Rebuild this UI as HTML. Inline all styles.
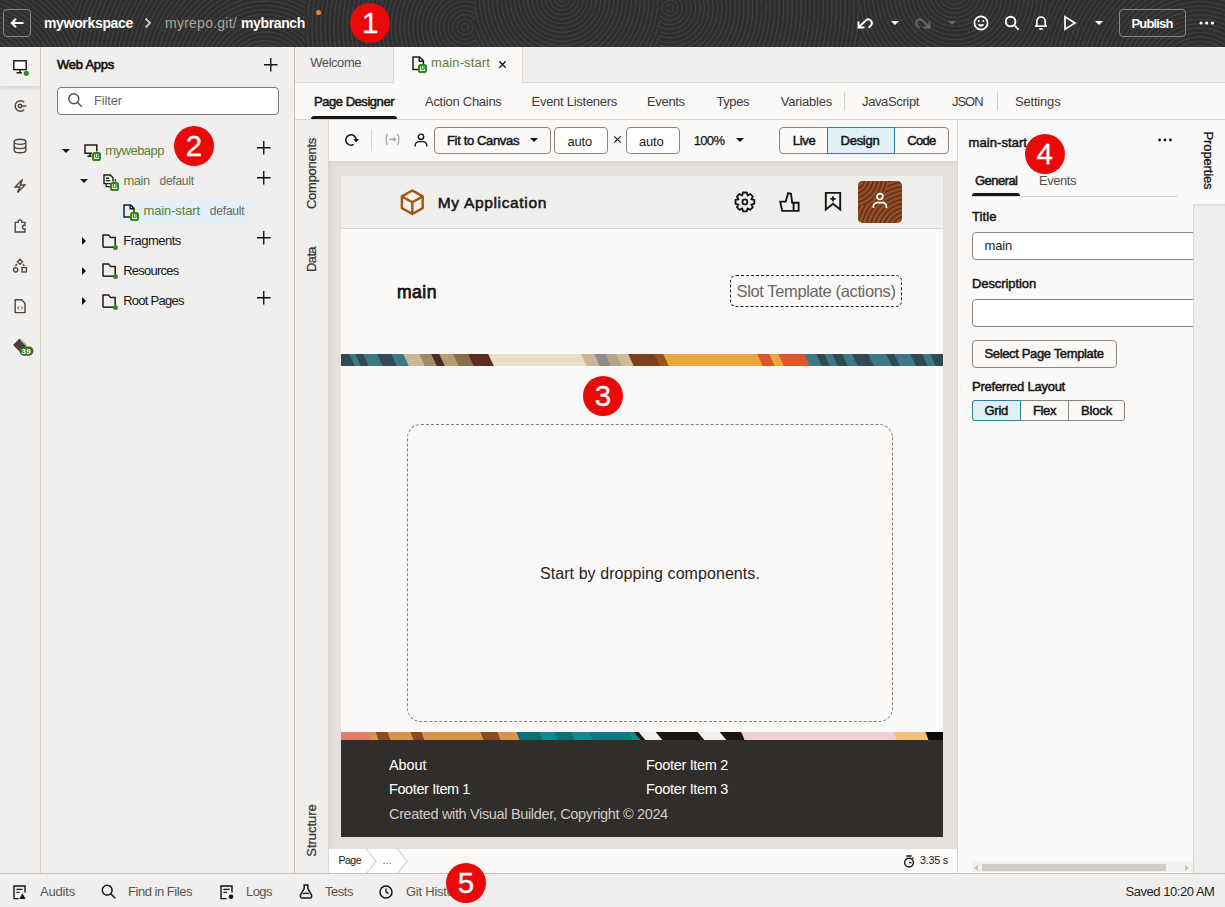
<!DOCTYPE html>
<html lang="en">
<head>
<meta charset="utf-8">
<title>Visual Builder - main-start</title>
<style>
*{box-sizing:border-box;margin:0;padding:0}
html,body{width:1225px;height:907px;overflow:hidden;background:#f1efed;font-family:"Liberation Sans",sans-serif;color:#161513;font-size:13px}
.abs{position:absolute}
#hdr{position:absolute;left:0;top:0;width:1225px;height:47px;background:#313131;overflow:hidden}
#hpat i{position:absolute;top:0;height:47px;display:block}
.badge{position:absolute;width:40px;height:40px;border-radius:50%;background:#e90909;color:#fff;font-size:29.5px;line-height:40.7px;text-align:center;z-index:50;-webkit-text-stroke:.3px #fff}
svg{position:absolute;overflow:visible}
.txt{position:absolute;white-space:pre}
.btn{position:absolute;border:1px solid #8b8580;border-radius:4px;background:#fbf9f8}
.inp{position:absolute;border:1px solid #8b8580;border-radius:4px;background:#fff}
</style>
</head>
<body>
<div id="hdr">
<div id="hpat" class="abs" style="left:0;top:0;width:1225px;height:47px">
<i style="left:0px;width:75px;background:repeating-radial-gradient(circle at -30px 90px,#2f2f2f 0,#2f2f2f 2.6px,#3e3e3e 3.1px,#3e3e3e 3.9px,#2f2f2f 4.4px)"></i>
<i style="left:75px;width:230px;background:repeating-radial-gradient(circle at 190px 75px,#2f2f2f 0,#2f2f2f 2.6px,#3e3e3e 3.1px,#3e3e3e 3.9px,#2f2f2f 4.4px)"></i>
<i style="left:305px;width:170px;background:repeating-radial-gradient(circle at 160px 27px,#2f2f2f 0,#2f2f2f 2.6px,#3e3e3e 3.1px,#3e3e3e 3.9px,#2f2f2f 4.4px)"></i>
<i style="left:475px;width:185px;background:repeating-radial-gradient(circle at 87px -2px,#2f2f2f 0,#2f2f2f 2.6px,#3e3e3e 3.1px,#3e3e3e 3.9px,#2f2f2f 4.4px)"></i>
<i style="left:660px;width:200px;background:repeating-radial-gradient(circle at 10px 8px,#2f2f2f 0,#2f2f2f 2.6px,#3e3e3e 3.1px,#3e3e3e 3.9px,#2f2f2f 4.4px)"></i>
<i style="left:860px;width:190px;background:repeating-radial-gradient(circle at 95px -8px,#2f2f2f 0,#2f2f2f 2.6px,#3e3e3e 3.1px,#3e3e3e 3.9px,#2f2f2f 4.4px)"></i>
<i style="left:1050px;width:175px;background:repeating-radial-gradient(circle at 150px 80px,#2f2f2f 0,#2f2f2f 2.6px,#3e3e3e 3.1px,#3e3e3e 3.9px,#2f2f2f 4.4px)"></i>
</div>
<div class="abs" style="left:3px;top:9px;width:28px;height:28px;border:1px solid #8b8580;border-radius:4px"></div>
<svg width="14" height="10" style="left:10px;top:18px" viewBox="0 0 14 10" fill="none" stroke="#fff" stroke-width="2"><path d="M13.5 5H2M6 0.8L1.8 5L6 9.2"/></svg>
<div class="txt" style="left:44px;top:16.4px;font-size:14px;line-height:14px;font-weight:bold;color:#fff;letter-spacing:-0.33px;">myworkspace</div>
<svg width="8" height="12" style="left:144px;top:17px" viewBox="0 0 8 12" fill="none" stroke="#c9c5c0" stroke-width="1.8"><path d="M1.5 1.5L6 6L1.5 10.5"/></svg>
<div class="txt" style="left:165px;top:16.4px;font-size:14px;line-height:14px;font-weight:normal;color:#a8a4a0;letter-spacing:0.25px;">myrepo.git/</div>
<div class="txt" style="left:241px;top:16.4px;font-size:14px;line-height:14px;font-weight:bold;color:#fff;letter-spacing:-0.37px;">mybranch</div>
<div class="abs" style="left:315.5px;top:10px;width:5px;height:5px;border-radius:50%;background:#e8823a"></div>
<svg width="16" height="12" style="left:857px;top:17px" viewBox="0 0 16 12" fill="none" stroke="#fff" stroke-width="1.9"><path d="M1.5 4.5V10.5H7.5M2 10L9 3.2A3.6 3.6 0 0 1 14 8.3L11.5 10.8"/></svg>
<svg width="8" height="4" style="left:891px;top:21px" viewBox="0 0 8 4"><path d="M0 0H8L4 4Z" fill="#fff"/></svg>
<svg width="16" height="12" style="left:915px;top:17px" viewBox="0 0 16 12" fill="none" stroke="#6b6763" stroke-width="1.9"><path d="M14.5 4.5V10.5H8.5M14 10L7 3.2A3.6 3.6 0 0 0 2 8.3L4.5 10.8"/></svg>
<svg width="8" height="4" style="left:948px;top:21px" viewBox="0 0 8 4"><path d="M0 0H8L4 4Z" fill="#6b6763"/></svg>
<svg width="16" height="16" style="left:973px;top:15px" viewBox="0 0 16 16" fill="none" stroke="#fff" stroke-width="1.7"><circle cx="8" cy="8" r="6.6"/><path d="M4.8 9.3A3.3 3.3 0 0 0 11.2 9.3Z" fill="#fff" stroke="none"/><circle cx="5.7" cy="6" r="1" fill="#fff" stroke="none"/><circle cx="10.3" cy="6" r="1" fill="#fff" stroke="none"/></svg>
<svg width="16" height="16" style="left:1004px;top:15px" viewBox="0 0 16 16" fill="none" stroke="#fff" stroke-width="1.9"><circle cx="6.6" cy="6.6" r="4.8"/><path d="M10.2 10.2L14.6 14.6"/></svg>
<svg width="14" height="16" style="left:1034px;top:15px" viewBox="0 0 14 16" fill="none" stroke="#fff" stroke-width="1.7"><path d="M1 11.2H13M2.8 11V6.2A4.2 4.2 0 0 1 11.2 6.2V11M5.3 13.8H8.7"/></svg>
<svg width="14" height="16" style="left:1063px;top:15px" viewBox="0 0 14 16" fill="none" stroke="#fff" stroke-width="1.7"><path d="M2 1.8V14.2L12 8Z"/></svg>
<svg width="8" height="4" style="left:1094.5px;top:21px" viewBox="0 0 8 4"><path d="M0 0H8L4 4Z" fill="#fff"/></svg>
<div class="abs" style="left:1119px;top:9px;width:67px;height:28px;border:1px solid #8b8580;border-radius:4px"></div>
<div class="txt" style="left:1131.5px;top:16.5px;font-size:13px;line-height:13px;font-weight:bold;color:#fff;letter-spacing:-0.85px;">Publish</div>
<svg width="16" height="4" style="left:1199px;top:21px" viewBox="0 0 16 4" fill="#fff"><circle cx="2" cy="2" r="1.6"/><circle cx="7.7" cy="2" r="1.6"/><circle cx="13.4" cy="2" r="1.6"/></svg>
</div>
<div class="abs" style="left:0;top:47px;width:41px;height:826px;background:#f1efed;border-right:1px solid #d3cfca"></div>
<div class="abs" style="left:0;top:47px;width:40px;height:39px;background:#f2f0ee;box-shadow:0 2px 4px rgba(0,0,0,.13)"></div>
<svg width="16" height="16" style="left:12px;top:59px" viewBox="0 0 16 16" fill="none" stroke="#1f1c1a" stroke-width="1.45"><rect x="1.8" y="1.8" width="12.4" height="8.8" fill="#fff"/><path d="M8 10.6V13.6M4.5 13.8H10"/><circle cx="14.3" cy="14.3" r="2.6" fill="#2f8a1f" stroke="none"/></svg>
<svg width="16" height="16" style="left:12px;top:98px" viewBox="0 0 16 16" fill="none" stroke="#4a4541" stroke-width="1.4"><path d="M12.2 4.2A5.3 5.3 0 1 0 12.2 11.8"/><circle cx="8" cy="8" r="1.7"/><path d="M9.7 8H14.5"/></svg>
<svg width="16" height="16" style="left:12px;top:138px" viewBox="0 0 16 16" fill="none" stroke="#4a4541" stroke-width="1.4"><ellipse cx="8" cy="3.8" rx="5.8" ry="2.6"/><path d="M2.2 3.8V12.2C2.2 13.6 4.8 14.8 8 14.8S13.8 13.6 13.8 12.2V3.8M2.2 8C2.2 9.4 4.8 10.6 8 10.6S13.8 9.4 13.8 8"/></svg>
<svg width="16" height="16" style="left:12px;top:178px" viewBox="0 0 16 16" fill="none" stroke="#4a4541" stroke-width="1.4" stroke-linejoin="miter"><path d="M10.5 1.5L3 9H7.8L5.5 14.5L13 7H8.2Z"/></svg>
<svg width="16" height="16" style="left:12px;top:218px" viewBox="0 0 16 16" fill="none" stroke="#4a4541" stroke-width="1.4"><path d="M3.2 14V4.4H6.2A1.9 1.9 0 1 1 9.8 4.4H13V7.4A1.9 1.9 0 1 0 13 11V14Z"/></svg>
<svg width="16" height="16" style="left:12px;top:258px" viewBox="0 0 16 16" fill="none" stroke="#4a4541" stroke-width="1.3"><path d="M8 1.2L10.6 3.8L8 6.4L5.4 3.8Z"/><circle cx="3.6" cy="11.8" r="2.2"/><rect x="10" y="9.6" width="4.4" height="4.4"/><path d="M3.4 8.2L5 6M12.4 8.2L11 6"/></svg>
<svg width="16" height="16" style="left:12px;top:298px" viewBox="0 0 16 16" fill="none" stroke="#4a4541" stroke-width="1.4"><path d="M3.2 1.8H9.6L13 5.2V14.6H3.2Z"/><path d="M7 8.6L5.6 10L7 11.4M9.2 8.6L10.6 10L9.2 11.4" stroke-width="1"/></svg>
<svg width="22" height="20" style="left:12px;top:337px" viewBox="0 0 22 20"><path d="M7.5 1.5L14.5 8.5L8 15L1 8Z" fill="#47423e"/><path d="M8.5 2.5L14 8" stroke="#b9b4ae" stroke-width="1.6"/><rect x="7.5" y="9.5" width="14" height="9.2" rx="4.6" fill="#3f6f1d"/></svg>
<div class="txt" style="left:21.6px;top:347.6px;font-size:8px;line-height:8px;font-weight:bold;color:#fff;letter-spacing:0.25px;">39</div>
<div class="abs" style="left:41px;top:47px;width:254px;height:826px;background:#f1efed;border-right:1px solid #c4c0bb"></div>
<div class="txt" style="left:57px;top:58.0px;font-size:13px;line-height:13px;font-weight:normal;color:#161513;letter-spacing:-0.25px;-webkit-text-stroke:.65px #161513;">Web Apps</div>
<svg width="13.5" height="13.5" style="left:263.75px;top:58.05px" viewBox="0 0 13.5 13.5" stroke="#161513" stroke-width="1.4"><path d="M6.75 0V13.5M0 6.75H13.5"/></svg>
<div class="inp" style="left:57px;top:87px;width:222px;height:28px;border-color:#7d7873"></div>
<svg width="16" height="16" style="left:67px;top:92px" viewBox="0 0 16 16" fill="none" stroke="#55504b" stroke-width="1.4"><circle cx="6.8" cy="6.8" r="5"/><path d="M10.5 10.5L14.8 14.8"/></svg>
<div class="txt" style="left:94px;top:94.0px;font-size:13px;line-height:13px;font-weight:normal;color:#6b6560;letter-spacing:-0.15px;">Filter</div>
<svg width="8" height="4" style="left:62px;top:149.2px" viewBox="0 0 8 4"><path d="M0 0H8L4 4Z" fill="#161513"/></svg>
<svg width="14" height="13" style="left:84.3px;top:143.6px" viewBox="0 0 14 13" fill="none" stroke="#1f1c1a" stroke-width="1.5"><path d="M8 9.3H1V1H12.8V7.5"/><path d="M6 9.5V12M3.4 12.2H7.6"/></svg>
<div class="abs" style="left:92px;top:152px;width:9px;height:9px;border:2px solid #2f8a12;border-radius:2.6px;background:#f7fbf3"></div><div class="txt" style="left:94.4px;top:153.7px;font-size:5.8px;line-height:5.8px;font-weight:bold;color:#1d6a07;-webkit-text-stroke:.25px #1d6a07">U</div>
<div class="txt" style="left:105.3px;top:144.0px;font-size:13px;line-height:13px;font-weight:normal;color:#5a7f35;letter-spacing:-0.52px;">mywebapp</div>
<svg width="13.5" height="13.5" style="left:257.45px;top:141.45px" viewBox="0 0 13.5 13.5" stroke="#161513" stroke-width="1.4"><path d="M6.75 0V13.5M0 6.75H13.5"/></svg>
<svg width="8" height="4" style="left:80px;top:179px" viewBox="0 0 8 4"><path d="M0 0H8L4 4Z" fill="#161513"/></svg>
<svg width="14" height="14" style="left:102.6px;top:174px" viewBox="0 0 14 14" fill="none" stroke="#1f1c1a" stroke-width="1.4"><path d="M8 9.6H1V1H7.2L10 3.8V7.4"/><path d="M3 4.2H6M3 6.6H7.4"/><path d="M3.2 9.8V12.6H7.6M12.4 5.2V7.4"/></svg>
<div class="abs" style="left:110px;top:182px;width:9px;height:9px;border:2px solid #2f8a12;border-radius:2.6px;background:#f7fbf3"></div><div class="txt" style="left:112.4px;top:183.7px;font-size:5.8px;line-height:5.8px;font-weight:bold;color:#1d6a07;-webkit-text-stroke:.25px #1d6a07">U</div>
<div class="txt" style="left:123.5px;top:174.0px;font-size:13px;line-height:13px;font-weight:normal;color:#5a7f35;letter-spacing:-0.47px;">main</div>
<div class="txt" style="left:159.5px;top:175.3px;font-size:12px;line-height:12px;font-weight:normal;color:#6b6560;letter-spacing:-0.25px;">default</div>
<svg width="13.5" height="13.5" style="left:257.45px;top:171.45px" viewBox="0 0 13.5 13.5" stroke="#161513" stroke-width="1.4"><path d="M6.75 0V13.5M0 6.75H13.5"/></svg>
<div class="abs" style="left:118px;top:199px;width:132px;height:24px;background:#e4f0f7"></div>
<svg width="13" height="14" style="left:123.2px;top:204px" viewBox="0 0 13 14" fill="none" stroke="#1f1c1a" stroke-width="1.5"><path d="M7.4 13H1V1H7.6L11 4.4V8.4"/><path d="M7.2 1.2V4.8H10.8"/></svg>
<div class="abs" style="left:130px;top:212px;width:9px;height:9px;border:2px solid #2f8a12;border-radius:2.6px;background:#f7fbf3"></div><div class="txt" style="left:132.4px;top:213.7px;font-size:5.8px;line-height:5.8px;font-weight:bold;color:#1d6a07;-webkit-text-stroke:.25px #1d6a07">U</div>
<div class="txt" style="left:143.5px;top:204.1px;font-size:13px;line-height:13px;font-weight:normal;color:#5a7f35;letter-spacing:-0.13px;">main-start</div>
<div class="txt" style="left:209.8px;top:205.3px;font-size:12px;line-height:12px;font-weight:normal;color:#6b6560;letter-spacing:-0.2px;">default</div>
<svg width="4" height="8" style="left:82px;top:237.10000000000002px" viewBox="0 0 4 8"><path d="M0 0V8L4 4Z" fill="#161513"/></svg>
<svg width="16" height="16" style="left:101.6px;top:233.5px" viewBox="0 0 16 16" fill="none" stroke="#1f1c1a" stroke-width="1.5"><path d="M1 13.2V1H6.6L8.6 3.6H13.2V11"/><path d="M1 13.2H11.5"/><circle cx="13.4" cy="13.4" r="2.5" fill="#2f8a1f" stroke="none"/></svg>
<div class="txt" style="left:123.2px;top:234.3px;font-size:13px;line-height:13px;font-weight:normal;color:#161513;letter-spacing:-0.5px;">Fragments</div>
<svg width="13.5" height="13.5" style="left:257.45px;top:231.35000000000002px" viewBox="0 0 13.5 13.5" stroke="#161513" stroke-width="1.4"><path d="M6.75 0V13.5M0 6.75H13.5"/></svg>
<svg width="4" height="8" style="left:82px;top:267.0px" viewBox="0 0 4 8"><path d="M0 0V8L4 4Z" fill="#161513"/></svg>
<svg width="16" height="16" style="left:101.6px;top:263.4px" viewBox="0 0 16 16" fill="none" stroke="#1f1c1a" stroke-width="1.5"><path d="M1 13.2V1H6.6L8.6 3.6H13.2V11"/><path d="M1 13.2H11.5"/><circle cx="13.4" cy="13.4" r="2.5" fill="#2f8a1f" stroke="none"/></svg>
<div class="txt" style="left:123.2px;top:264.2px;font-size:13px;line-height:13px;font-weight:normal;color:#161513;letter-spacing:-0.77px;">Resources</div>
<svg width="4" height="8" style="left:82px;top:297.1px" viewBox="0 0 4 8"><path d="M0 0V8L4 4Z" fill="#161513"/></svg>
<svg width="16" height="16" style="left:101.6px;top:293.5px" viewBox="0 0 16 16" fill="none" stroke="#1f1c1a" stroke-width="1.5"><path d="M1 13.2V1H6.6L8.6 3.6H13.2V11"/><path d="M1 13.2H11.5"/><circle cx="13.4" cy="13.4" r="2.5" fill="#2f8a1f" stroke="none"/></svg>
<div class="txt" style="left:123.2px;top:294.3px;font-size:13px;line-height:13px;font-weight:normal;color:#161513;letter-spacing:-0.74px;">Root Pages</div>
<svg width="13.5" height="13.5" style="left:257.45px;top:291.35px" viewBox="0 0 13.5 13.5" stroke="#161513" stroke-width="1.4"><path d="M6.75 0V13.5M0 6.75H13.5"/></svg>
<div class="abs" style="left:0;top:873px;width:1225px;height:34px;background:#f1efed;border-top:1px solid #c4c0bb"></div>
<div class="txt" style="left:40px;top:885.0px;font-size:13px;line-height:13px;font-weight:normal;color:#5a5550;letter-spacing:-0.19px;">Audits</div>
<div class="txt" style="left:128px;top:885.0px;font-size:13px;line-height:13px;font-weight:normal;color:#5a5550;letter-spacing:-0.47px;">Find in Files</div>
<div class="txt" style="left:246px;top:885.0px;font-size:13px;line-height:13px;font-weight:normal;color:#5a5550;letter-spacing:-0.55px;">Logs</div>
<div class="txt" style="left:325px;top:885.0px;font-size:13px;line-height:13px;font-weight:normal;color:#5a5550;letter-spacing:-0.47px;">Tests</div>
<div class="txt" style="left:406px;top:885.0px;font-size:13px;line-height:13px;font-weight:normal;color:#5a5550;letter-spacing:-0.24px;">Git History</div>
<div class="txt" style="left:1125.5px;top:885.0px;font-size:13px;line-height:13px;font-weight:normal;color:#1f1c1a;letter-spacing:-0.46px;">Saved 10:20 AM</div>
<div class="abs" style="left:295px;top:47px;width:930px;height:826px;background:#fbf9f8"></div>
<div class="abs" style="left:295px;top:47px;width:930px;height:36px;background:#f1efed;border-bottom:1px solid #d9d5d1"></div>
<div class="abs" style="left:393px;top:47px;width:130px;height:36px;background:#fbf9f8;border-left:1px solid #dcd8d4;border-right:1px solid #dcd8d4"></div>
<div class="txt" style="left:310.3px;top:56.3px;font-size:13px;line-height:13px;font-weight:normal;color:#55504b;letter-spacing:-0.46px;">Welcome</div>
<svg width="13" height="15" style="left:411.8px;top:55.8px" viewBox="0 0 13 15" fill="none" stroke="#1f1c1a" stroke-width="1.5"><path d="M7.4 13.6H1V1H7.6L11.4 4.8V8.6"/><path d="M7.2 1.2V5.2H11.2"/></svg>
<div class="abs" style="left:418px;top:64px;width:9px;height:9px;border:2px solid #2f8a12;border-radius:2.6px;background:#f7fbf3"></div><div class="txt" style="left:420.4px;top:65.7px;font-size:5.8px;line-height:5.8px;font-weight:bold;color:#1d6a07;-webkit-text-stroke:.25px #1d6a07">U</div>
<div class="txt" style="left:431px;top:56.3px;font-size:13px;line-height:13px;font-weight:normal;color:#5a7f35;letter-spacing:0.12px;">main-start</div>
<svg width="7" height="7" style="left:498.7px;top:60.8px" viewBox="0 0 7 7" stroke="#161513" stroke-width="1.3"><path d="M0.3 0.3L6.7 6.7M6.7 0.3L0.3 6.7"/></svg>
<div class="abs" style="left:295px;top:119px;width:930px;height:1px;background:#d9d5d1"></div>
<div class="abs" style="left:311px;top:116.3px;width:86px;height:3.2px;background:#161513;border-radius:4px 4px 0 0"></div>
<div class="txt" style="left:314px;top:95.0px;font-size:13px;line-height:13px;font-weight:normal;color:#161513;letter-spacing:-0.46px;-webkit-text-stroke:.5px #161513;">Page Designer</div>
<div class="txt" style="left:425px;top:95.0px;font-size:13px;line-height:13px;font-weight:normal;color:#3f3a36;letter-spacing:-0.28px;">Action Chains</div>
<div class="txt" style="left:531.5px;top:95.0px;font-size:13px;line-height:13px;font-weight:normal;color:#3f3a36;letter-spacing:-0.27px;">Event Listeners</div>
<div class="txt" style="left:647px;top:95.0px;font-size:13px;line-height:13px;font-weight:normal;color:#3f3a36;letter-spacing:-0.34px;">Events</div>
<div class="txt" style="left:716.5px;top:95.0px;font-size:13px;line-height:13px;font-weight:normal;color:#3f3a36;letter-spacing:-0.44px;">Types</div>
<div class="txt" style="left:780.7px;top:95.0px;font-size:13px;line-height:13px;font-weight:normal;color:#3f3a36;letter-spacing:-0.21px;">Variables</div>
<div class="abs" style="left:844px;top:92px;width:1px;height:18px;background:#cfcbc6"></div>
<div class="txt" style="left:862px;top:95.0px;font-size:13px;line-height:13px;font-weight:normal;color:#3f3a36;letter-spacing:-0.37px;">JavaScript</div>
<div class="txt" style="left:952px;top:95.0px;font-size:13px;line-height:13px;font-weight:normal;color:#3f3a36;letter-spacing:-1.04px;">JSON</div>
<div class="abs" style="left:997px;top:92px;width:1px;height:18px;background:#cfcbc6"></div>
<div class="txt" style="left:1015px;top:95.0px;font-size:13px;line-height:13px;font-weight:normal;color:#3f3a36;letter-spacing:-0.19px;">Settings</div>
<div class="abs" style="left:295px;top:120px;width:34px;height:753px;background:#f1efed;border-right:1px solid #dcd8d4"></div>
<div class="txt" style="left:275.5px;top:167.0px;width:71.0px;font-size:13px;line-height:13px;font-weight:normal;color:#3a3531;letter-spacing:-0.27px;transform:rotate(-90deg);transform-origin:50% 50%;-webkit-text-stroke:.25px #3a3531;">Components</div>
<div class="txt" style="left:298.5px;top:253.0px;width:25.0px;font-size:13px;line-height:13px;font-weight:normal;color:#3a3531;letter-spacing:-0.62px;transform:rotate(-90deg);transform-origin:50% 50%;-webkit-text-stroke:.25px #3a3531;">Data</div>
<div class="txt" style="left:284.8px;top:823.8px;width:52.5px;font-size:13px;line-height:13px;font-weight:normal;color:#3a3531;letter-spacing:-0.03px;transform:rotate(-90deg);transform-origin:50% 50%;-webkit-text-stroke:.25px #3a3531;">Structure</div>
<div class="abs" style="left:329px;top:120px;width:628px;height:41px;background:#fbf9f8"></div>
<svg width="14" height="14" style="left:343.7px;top:133.3px" viewBox="0 0 14 14" fill="none" stroke="#161513" stroke-width="1.5"><path d="M9.6 11.5A5.2 5.2 0 1 1 12.2 6.6"/><path d="M9.4 6H15L12.2 9.6Z" fill="#161513" stroke="none"/></svg>
<div class="abs" style="left:371px;top:130px;width:1px;height:21px;background:#d9d5d1"></div>
<svg width="17" height="12.8" style="left:383.5px;top:133.4px" viewBox="0 0 16 12" fill="none" stroke="#a39e99" stroke-width="1.15"><path d="M3.2 0.8Q0.6 6 3.2 11.2M12.8 0.8Q15.4 6 12.8 11.2M5 6H10.6M8.8 4.2L10.8 6L8.8 7.8"/></svg>
<svg width="14" height="14" style="left:413.5px;top:133px" viewBox="0 0 14 14" fill="none" stroke="#161513" stroke-width="1.4"><circle cx="7" cy="3.8" r="2.7"/><path d="M1.2 13.4V12.2A3.6 3.6 0 0 1 4.8 8.6H9.2A3.6 3.6 0 0 1 12.8 12.2V13.4"/></svg>
<div class="btn" style="left:434px;top:127px;width:117px;height:27px"></div>
<div class="txt" style="left:447px;top:134.0px;font-size:13px;line-height:13px;font-weight:normal;color:#161513;letter-spacing:-0.35px;-webkit-text-stroke:.5px #161513;">Fit to Canvas</div>
<svg width="8" height="4" style="left:530px;top:138px" viewBox="0 0 8 4"><path d="M0 0H8L4 4Z" fill="#161513"/></svg>
<div class="inp" style="left:554px;top:127px;width:54px;height:27px"></div>
<div class="txt" style="left:567.5px;top:134.5px;font-size:13px;line-height:13px;font-weight:normal;color:#1f1c1a;letter-spacing:-0.2px;">auto</div>
<svg width="7" height="7" style="left:613.5px;top:136.3px" viewBox="0 0 7 7" stroke="#1f1c1a" stroke-width="1.2"><path d="M0.3 0.3L6.7 6.7M6.7 0.3L0.3 6.7"/></svg>
<div class="inp" style="left:626px;top:127px;width:54px;height:27px"></div>
<div class="txt" style="left:639px;top:134.5px;font-size:13px;line-height:13px;font-weight:normal;color:#1f1c1a;letter-spacing:-0.2px;">auto</div>
<div class="txt" style="left:693.7px;top:134.0px;font-size:13px;line-height:13px;font-weight:normal;color:#161513;letter-spacing:-0.66px;-webkit-text-stroke:.25px #161513;">100%</div>
<svg width="8" height="4" style="left:736.4px;top:138px" viewBox="0 0 8 4"><path d="M0 0H8L4 4Z" fill="#161513"/></svg>
<div class="btn" style="left:779px;top:127px;width:170px;height:27px"></div>
<div class="abs" style="left:827px;top:127px;width:68px;height:27px;background:#e1eff6;border:1px solid #2d7fa6"></div>
<div class="txt" style="left:792.7px;top:134.0px;font-size:13px;line-height:13px;font-weight:normal;color:#161513;letter-spacing:-0.24px;-webkit-text-stroke:.5px #161513;">Live</div>
<div class="txt" style="left:840.6px;top:134.0px;font-size:13px;line-height:13px;font-weight:normal;color:#161513;letter-spacing:-0.28px;-webkit-text-stroke:.5px #161513;">Design</div>
<div class="txt" style="left:907.2px;top:134.0px;font-size:13px;line-height:13px;font-weight:normal;color:#161513;letter-spacing:-0.69px;-webkit-text-stroke:.5px #161513;">Code</div>
<div class="abs" style="left:329px;top:161px;width:628px;height:688px;background:#e4e1dd;box-shadow:inset 3px 3px 4px -2px rgba(0,0,0,.08)"></div>
<div class="abs" id="page" style="left:341px;top:176px;width:602px;height:661px;background:#fbf9f8"></div>
<div class="abs" style="left:341px;top:176px;width:602px;height:53px;background:#f1efed;border-bottom:1px solid #d9d5d1"></div>
<svg width="24.6" height="26.5" style="left:400.3px;top:188.8px" viewBox="0 0 26 28" fill="none" stroke="#9d590f" stroke-width="2.6" stroke-linejoin="round"><path d="M13 1.6L24 7.8V20.2L13 26.4L2 20.2V7.8Z"/><path d="M2.4 8L13 14L23.6 8M13 14V26"/></svg>
<div class="txt" style="left:437.8px;top:194.7px;font-size:15.5px;line-height:15.5px;font-weight:normal;color:#161513;letter-spacing:0.66px;-webkit-text-stroke:.55px #161513;">My Application</div>
<svg width="1" height="1" style="left:0;top:0" fill="none" stroke="#161513" stroke-width="1.8" stroke-linejoin="round"><path d="M754.31 199.99L754.31 203.81L751.28 204.52L751.27 204.56L752.90 207.20L750.20 209.90L747.56 208.27L747.52 208.28L746.81 211.31L742.99 211.31L742.28 208.28L742.24 208.27L739.60 209.90L736.90 207.20L738.53 204.56L738.52 204.52L735.49 203.81L735.49 199.99L738.52 199.28L738.53 199.24L736.90 196.60L739.60 193.90L742.24 195.53L742.28 195.52L742.99 192.49L746.81 192.49L747.52 195.52L747.56 195.53L750.20 193.90L752.90 196.60L751.27 199.24L751.28 199.28Z"/><circle cx="744.9" cy="201.9" r="2.5"/></svg>
<svg width="1" height="1" style="left:0;top:0" fill="none" stroke="#161513" stroke-width="1.9" stroke-linejoin="miter"><path d="M780.2 201.6H785.6L788.2 193.2L791 193.8L792.2 202.8H798.6V210.9H782.2Z"/><path d="M793.6 202.8V210.9"/></svg>
<svg width="18" height="22" style="left:824.2px;top:191.4px" viewBox="0 0 18 22" fill="none" stroke="#161513" stroke-width="1.9"><path d="M1.8 1.9H16.2V18.6L9 12.8L1.8 18.6Z"/><path d="M9 5.2V10.4M6.4 7.8H11.6" stroke-width="1.7"/></svg>
<div class="abs" style="left:858px;top:181px;width:44px;height:42px;border-radius:5px;overflow:hidden;background:#8a4b26"><div class="abs" style="left:0;top:0;width:44px;height:44px;background:repeating-radial-gradient(circle at 50px 52px,#6a3318 0,#6a3318 1px,#90502a 1.8px,#90502a 3.4px,#6a3318 4.2px)"></div><div class="abs" style="left:0;top:0;width:30px;height:24px;border-radius:0 0 24px 0;background:repeating-radial-gradient(circle at -6px -4px,#6a3318 0,#6a3318 1px,#90502a 1.8px,#90502a 3.4px,#6a3318 4.2px)"></div></div>
<svg width="16" height="16" style="left:872px;top:192px" viewBox="0 0 16 16" fill="none" stroke="#fff" stroke-width="1.7"><circle cx="7.9" cy="4.6" r="2.9"/><path d="M1.4 16V14.6A4 4 0 0 1 5.4 10.6H10.4A4 4 0 0 1 14.4 14.6V16"/></svg>
<div class="txt" style="left:397px;top:283.5px;font-size:17.6px;line-height:17.6px;font-weight:normal;color:#161513;letter-spacing:0.46px;-webkit-text-stroke:.75px #161513;">main</div>
<div class="abs" style="left:730px;top:275px;width:172px;height:32px;border:1px dashed #1f1c1a;border-radius:6px"></div>
<div class="txt" style="left:736.5px;top:283.2px;font-size:16.5px;line-height:16.5px;font-weight:normal;color:#6b6560;letter-spacing:-0.37px;">Slot Template (actions)</div>
<div class="abs" style="left:341px;top:354px;width:602px;height:12px;overflow:hidden;background:#39606d"><i class="abs" style="left:-6px;top:0;width:18px;height:12px;background:#2f4a52;transform:skewX(25deg)"></i><i class="abs" style="left:11px;top:0;width:7px;height:12px;background:#3d7888;transform:skewX(25deg)"></i><i class="abs" style="left:17px;top:0;width:9px;height:12px;background:#2f4a52;transform:skewX(25deg)"></i><i class="abs" style="left:25px;top:0;width:15px;height:12px;background:#3d7888;transform:skewX(25deg)"></i><i class="abs" style="left:39px;top:0;width:15px;height:12px;background:#2f4a52;transform:skewX(25deg)"></i><i class="abs" style="left:53px;top:0;width:13px;height:12px;background:#3d7888;transform:skewX(25deg)"></i><i class="abs" style="left:65px;top:0;width:17px;height:12px;background:#c9b797;transform:skewX(25deg)"></i><i class="abs" style="left:81px;top:0;width:13px;height:12px;background:#a38a64;transform:skewX(25deg)"></i><i class="abs" style="left:93px;top:0;width:9px;height:12px;background:#4d2c24;transform:skewX(25deg)"></i><i class="abs" style="left:101px;top:0;width:15px;height:12px;background:#b59c74;transform:skewX(25deg)"></i><i class="abs" style="left:115px;top:0;width:16px;height:12px;background:#8c6c4a;transform:skewX(25deg)"></i><i class="abs" style="left:130px;top:0;width:21px;height:12px;background:#5c2c1e;transform:skewX(25deg)"></i><i class="abs" style="left:150px;top:0;width:94px;height:12px;background:#e9dec6;transform:skewX(25deg)"></i><i class="abs" style="left:243px;top:0;width:14px;height:12px;background:#c9b797;transform:skewX(25deg)"></i><i class="abs" style="left:256px;top:0;width:12px;height:12px;background:#8e8c8a;transform:skewX(25deg)"></i><i class="abs" style="left:267px;top:0;width:12px;height:12px;background:#b8a582;transform:skewX(25deg)"></i><i class="abs" style="left:278px;top:0;width:13px;height:12px;background:#cfbb96;transform:skewX(25deg)"></i><i class="abs" style="left:290px;top:0;width:27px;height:12px;background:#7d3f1d;transform:skewX(25deg)"></i><i class="abs" style="left:316px;top:0;width:10px;height:12px;background:#9a5226;transform:skewX(25deg)"></i><i class="abs" style="left:325px;top:0;width:95px;height:12px;background:#e9a83e;transform:skewX(25deg)"></i><i class="abs" style="left:419px;top:0;width:13px;height:12px;background:#df562d;transform:skewX(25deg)"></i><i class="abs" style="left:431px;top:0;width:10px;height:12px;background:#e9a83e;transform:skewX(25deg)"></i><i class="abs" style="left:440px;top:0;width:27px;height:12px;background:#df562d;transform:skewX(25deg)"></i><i class="abs" style="left:466px;top:0;width:13px;height:12px;background:#3d7888;transform:skewX(25deg)"></i><i class="abs" style="left:478px;top:0;width:9px;height:12px;background:#2f4a52;transform:skewX(25deg)"></i><i class="abs" style="left:486px;top:0;width:9px;height:12px;background:#3d7888;transform:skewX(25deg)"></i><i class="abs" style="left:494px;top:0;width:11px;height:12px;background:#2f4a52;transform:skewX(25deg)"></i><i class="abs" style="left:504px;top:0;width:11px;height:12px;background:#3d7888;transform:skewX(25deg)"></i><i class="abs" style="left:514px;top:0;width:17px;height:12px;background:#2f4a52;transform:skewX(25deg)"></i><i class="abs" style="left:530px;top:0;width:19px;height:12px;background:#3d7888;transform:skewX(25deg)"></i><i class="abs" style="left:548px;top:0;width:9px;height:12px;background:#2f4a52;transform:skewX(25deg)"></i><i class="abs" style="left:556px;top:0;width:17px;height:12px;background:#3d7888;transform:skewX(25deg)"></i><i class="abs" style="left:572px;top:0;width:13px;height:12px;background:#2f4a52;transform:skewX(25deg)"></i><i class="abs" style="left:584px;top:0;width:9px;height:12px;background:#3d7888;transform:skewX(25deg)"></i><i class="abs" style="left:592px;top:0;width:19px;height:12px;background:#2f4a52;transform:skewX(25deg)"></i></div>
<div class="abs" style="left:407px;top:424px;width:486px;height:298px;border:1px dashed #857f7a;border-radius:14px"></div>
<div class="txt" style="left:540px;top:566.0px;font-size:16px;line-height:16px;font-weight:normal;color:#25221f;letter-spacing:0.07px;">Start by dropping components.</div>
<div class="abs" style="left:341px;top:732px;width:602px;height:8px;overflow:hidden;background:#d9954e"><i class="abs" style="left:-5px;top:0;width:34px;height:8px;background:#e27c6a;transform:skewX(20deg)"></i><i class="abs" style="left:28px;top:0;width:150px;height:8px;background:#d9954e;transform:skewX(20deg)"></i><i class="abs" style="left:36px;top:0;width:12px;height:8px;background:#8a4a22;transform:skewX(20deg)"></i><i class="abs" style="left:71px;top:0;width:11px;height:8px;background:#8a4a22;transform:skewX(20deg)"></i><i class="abs" style="left:141px;top:0;width:17px;height:8px;background:#8a4a22;transform:skewX(20deg)"></i><i class="abs" style="left:177px;top:0;width:24px;height:8px;background:#0b7076;transform:skewX(20deg)"></i><i class="abs" style="left:200px;top:0;width:16px;height:8px;background:#0f8b90;transform:skewX(20deg)"></i><i class="abs" style="left:215px;top:0;width:18px;height:8px;background:#0b7076;transform:skewX(20deg)"></i><i class="abs" style="left:232px;top:0;width:19px;height:8px;background:#0f8b90;transform:skewX(20deg)"></i><i class="abs" style="left:250px;top:0;width:41px;height:8px;background:#0c7a80;transform:skewX(20deg)"></i><i class="abs" style="left:290px;top:0;width:7px;height:8px;background:#0f8b90;transform:skewX(20deg)"></i><i class="abs" style="left:296px;top:0;width:6px;height:8px;background:#1a1413;transform:skewX(40deg)"></i><i class="abs" style="left:301px;top:0;width:18px;height:8px;background:#f1f0ee;transform:skewX(40deg)"></i><i class="abs" style="left:318px;top:0;width:43px;height:8px;background:#1a1413;transform:skewX(40deg)"></i><i class="abs" style="left:360px;top:0;width:23px;height:8px;background:#f1f0ee;transform:skewX(40deg)"></i><i class="abs" style="left:382px;top:0;width:21px;height:8px;background:#1a1413;transform:skewX(40deg)"></i><i class="abs" style="left:402px;top:0;width:153px;height:8px;background:#ecd0d6;transform:skewX(20deg)"></i><i class="abs" style="left:554px;top:0;width:33px;height:8px;background:#f0c27a;transform:skewX(20deg)"></i><i class="abs" style="left:586px;top:0;width:25px;height:8px;background:#0d0b0a;transform:skewX(20deg)"></i></div>
<div class="abs" style="left:341px;top:740px;width:602px;height:97px;background:#312d2a"></div>
<div class="txt" style="left:389px;top:757.8px;font-size:14.5px;line-height:14.5px;font-weight:normal;color:#fff;letter-spacing:-0.08px;">About</div>
<div class="txt" style="left:646px;top:757.8px;font-size:14.5px;line-height:14.5px;font-weight:normal;color:#fff;letter-spacing:-0.33px;">Footer Item 2</div>
<div class="txt" style="left:389px;top:781.8px;font-size:14.5px;line-height:14.5px;font-weight:normal;color:#fff;letter-spacing:-0.4px;">Footer Item 1</div>
<div class="txt" style="left:646px;top:781.8px;font-size:14.5px;line-height:14.5px;font-weight:normal;color:#fff;letter-spacing:-0.33px;">Footer Item 3</div>
<div class="txt" style="left:389px;top:806.8px;font-size:14.5px;line-height:14.5px;font-weight:normal;color:#cfcbc6;letter-spacing:-0.34px;">Created with Visual Builder, Copyright © 2024</div>
<div class="abs" style="left:329px;top:848.6px;width:628px;height:24.4px;background:#fbf9f8"></div>
<svg width="80" height="24.4" style="left:329px;top:848.6px" viewBox="0 0 80 24.4"><path d="M0 0H68.5L78 12.2L68.5 24.4H0Z" fill="#fff"/><path d="M37.5 0L47 12.2L37.5 24.4M68.5 0L78 12.2L68.5 24.4" fill="none" stroke="#dcd8d4" stroke-width="1.3"/></svg>
<div class="abs" style="left:295px;top:873px;width:930px;height:1px;background:#c4c0bb"></div>
<div class="txt" style="left:338.6px;top:855.1px;font-size:10.6px;line-height:10.6px;font-weight:normal;color:#161513;letter-spacing:-0.59px;">Page</div>
<div class="txt" style="left:382.5px;top:855.1px;font-size:11px;line-height:11px;font-weight:normal;color:#2d6f95;letter-spacing:-0.06px;">...</div>
<svg width="12" height="13" style="left:903.2px;top:854.6px" viewBox="0 0 12 13" fill="none" stroke="#161513" stroke-width="1.4"><circle cx="6" cy="7.6" r="4.4"/><path d="M3.4 1H8.6M6 7.6H8.6M9.4 3.6L10.4 2.6" /></svg>
<div class="txt" style="left:920px;top:855.4px;font-size:10.8px;line-height:10.8px;font-weight:normal;color:#161513;letter-spacing:-0.24px;">3.35 s</div>
<div class="abs" style="left:957px;top:120px;width:236px;height:753px;background:#fbf9f8;border-left:1px solid #d9d5d1"></div>
<div class="abs" style="left:1193px;top:204px;width:32px;height:669px;background:#f1efed;border-left:1px solid #dedad6;box-shadow:inset 0 3px 3px -2px rgba(0,0,0,.12)"></div>
<div class="txt" style="left:1179.6px;top:154.2px;width:57.8px;font-size:13px;line-height:13px;font-weight:normal;color:#161513;letter-spacing:-0.15px;transform:rotate(90deg);transform-origin:50% 50%;-webkit-text-stroke:.3px #161513;">Properties</div>
<div class="txt" style="left:968.6px;top:135.7px;font-size:13px;line-height:13px;font-weight:normal;color:#161513;letter-spacing:0.06px;-webkit-text-stroke:.5px #161513;">main-start</div>
<svg width="14" height="4" style="left:1158px;top:138px" viewBox="0 0 14 4" fill="#161513"><circle cx="1.6" cy="2" r="1.4"/><circle cx="7" cy="2" r="1.4"/><circle cx="12.4" cy="2" r="1.4"/></svg>
<div class="txt" style="left:975px;top:173.5px;font-size:13px;line-height:13px;font-weight:normal;color:#161513;letter-spacing:-0.54px;-webkit-text-stroke:.5px #161513;">General</div>
<div class="txt" style="left:1039px;top:173.5px;font-size:13px;line-height:13px;font-weight:normal;color:#55504b;letter-spacing:-0.46px;">Events</div>
<div class="abs" style="left:972px;top:195.5px;width:206px;height:1px;background:#d9d5d1"></div>
<div class="abs" style="left:972px;top:192.5px;width:48px;height:3.5px;background:#161513;border-radius:4px 4px 0 0"></div>
<div class="txt" style="left:972px;top:209.8px;font-size:13px;line-height:13px;font-weight:normal;color:#161513;letter-spacing:0.08px;-webkit-text-stroke:.5px #161513;">Title</div>
<div class="inp" style="left:972px;top:232px;width:230px;height:28px;border-radius:4px 0 0 4px;clip-path:inset(0 9px 0 0)"></div>
<div class="txt" style="left:984.5px;top:239.0px;font-size:13px;line-height:13px;font-weight:normal;color:#1f1c1a;letter-spacing:-0.17px;">main</div>
<div class="txt" style="left:972px;top:277.2px;font-size:13px;line-height:13px;font-weight:normal;color:#161513;letter-spacing:-0.09px;-webkit-text-stroke:.5px #161513;">Description</div>
<div class="inp" style="left:972px;top:299px;width:230px;height:28px;border-radius:4px 0 0 4px;clip-path:inset(0 9px 0 0)"></div>
<div class="btn" style="left:972px;top:340px;width:145px;height:27.5px"></div>
<div class="txt" style="left:984.5px;top:347.0px;font-size:13px;line-height:13px;font-weight:normal;color:#161513;letter-spacing:-0.36px;-webkit-text-stroke:.5px #161513;">Select Page Template</div>
<div class="txt" style="left:972px;top:379.8px;font-size:13px;line-height:13px;font-weight:normal;color:#161513;letter-spacing:-0.24px;-webkit-text-stroke:.5px #161513;">Preferred Layout</div>
<div class="btn" style="left:972px;top:400px;width:153px;height:21px;border-radius:3px"></div>
<div class="abs" style="left:1068px;top:400px;width:1px;height:21px;background:#8b8580"></div>
<div class="abs" style="left:972px;top:400px;width:49px;height:21px;background:#e1eff6;border:1px solid #2d7fa6;border-radius:3px 0 0 3px"></div>
<div class="txt" style="left:984.5px;top:404.0px;font-size:13px;line-height:13px;font-weight:normal;color:#161513;letter-spacing:-0.27px;-webkit-text-stroke:.5px #161513;">Grid</div>
<div class="txt" style="left:1033px;top:404.0px;font-size:13px;line-height:13px;font-weight:normal;color:#161513;letter-spacing:-0.39px;-webkit-text-stroke:.5px #161513;">Flex</div>
<div class="txt" style="left:1081px;top:404.0px;font-size:13px;line-height:13px;font-weight:normal;color:#161513;letter-spacing:-0.16px;-webkit-text-stroke:.5px #161513;">Block</div>
<div class="abs" style="left:972px;top:862px;width:221px;height:10px;background:#f3f1ef"></div>
<div class="abs" style="left:982px;top:864px;width:184px;height:7px;background:#cfccc8"></div>
<svg width="4" height="6" style="left:974px;top:864.5px" viewBox="0 0 4 6"><path d="M4 0V6L0 3Z" fill="#c4c0bb"/></svg>
<svg width="4" height="6" style="left:1185px;top:864.5px" viewBox="0 0 4 6"><path d="M0 0V6L4 3Z" fill="#c4c0bb"/></svg>
<svg width="13" height="15" style="left:13.4px;top:884.6px" viewBox="0 0 13 15" fill="none" stroke="#161513" stroke-width="1.4"><path d="M5.6 13.6H1V1H12V7.6"/><path d="M3.4 4.4H9.6M3.4 7.4H6.6" stroke-width="1.3"/><path d="M9.4 8.2L12.6 14H6.2Z" fill="#161513" stroke="none"/></svg>
<svg width="15" height="15" style="left:101px;top:884px" viewBox="0 0 15 15" fill="none" stroke="#161513" stroke-width="1.5"><circle cx="6.2" cy="6.2" r="4.9"/><path d="M9.8 9.8L14.2 14.2"/></svg>
<svg width="14" height="15" style="left:219.6px;top:884.6px" viewBox="0 0 14 15" fill="none" stroke="#161513" stroke-width="1.4"><path d="M6.6 13.6H1V1H12V7.4"/><path d="M3.4 4.4H9.6M3.4 7.4H7" stroke-width="1.3"/><circle cx="11" cy="11.8" r="2.3" fill="#161513" stroke="none"/></svg>
<svg width="14" height="15" style="left:298.6px;top:884.2px" viewBox="0 0 14 15" fill="none" stroke="#161513" stroke-width="1.5"><path d="M4.4 1H9.6M5.2 1.2V4.4L1.5 11.2A1.9 1.9 0 0 0 3.2 14H10.8A1.9 1.9 0 0 0 12.5 11.2L8.8 4.4V1.2"/><path d="M4 9.8Q7 8.4 10 9.8" stroke-width="1.2"/></svg>
<svg width="14" height="14" style="left:379.4px;top:884.6px" viewBox="0 0 14 14" fill="none" stroke="#161513" stroke-width="1.5"><circle cx="7" cy="7" r="6"/><path d="M7 3.4V7.2L9.6 8.4" stroke-width="1.3"/></svg>
<div class="badge" style="left:350.2px;top:3px">1</div>
<div class="badge" style="left:174px;top:125.69999999999999px">2</div>
<div class="badge" style="left:583px;top:376px">3</div>
<div class="badge" style="left:1024.8px;top:134.2px">4</div>
<div class="badge" style="left:446px;top:863px">5</div>
</body>
</html>
